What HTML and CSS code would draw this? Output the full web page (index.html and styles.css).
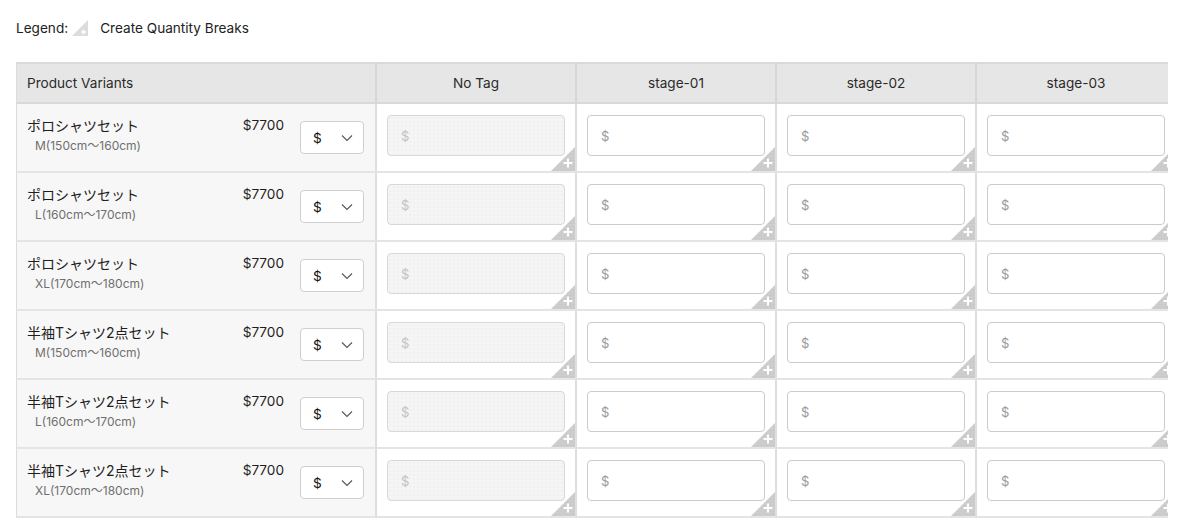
FILE: index.html
```html
<!DOCTYPE html>
<html>
<head>
<meta charset="utf-8">
<link rel="stylesheet" href="styles.css">
</head>
<body>
<div class="page">
  <div class="legend">
    <span>Legend:</span>
    <span class="legend-icon"><svg width="16" height="16" viewBox="0 0 16 16"><polygon points="16,0 16,16 0,16" fill="#dcdcdc"/><path d="M11.5 9.5v5M9 12h5" stroke="#fff" stroke-width="1.6"/></svg></span>
    <span>Create Quantity Breaks</span>
  </div>
  <div class="scroller">
    <table class="grid">
      <thead>
        <tr>
          <th class="col-variant">Product Variants</th>
          <th class="col-tag">No Tag</th>
          <th class="col-tag">stage-01</th>
          <th class="col-tag">stage-02</th>
          <th class="col-tag">stage-03</th>
        </tr>
      </thead>
      <tbody id="rows"></tbody>
    </table>
  </div>
</div>
<template id="row-tpl">
  <tr>
    <td class="variant">
      <div class="variant-inner">
        <div class="info">
          <div class="name"></div>
          <div class="sub"></div>
        </div>
        <div class="price">$7700</div>
        <div class="select"><span>$</span><svg width="12" height="8" viewBox="0 0 12 8"><path d="M1 1.5l5 5 5-5" fill="none" stroke="#555" stroke-width="1.1"/></svg></div>
      </div>
    </td>
  </tr>
</template>
<script>
const data = [
  ["ポロシャツセット","M(150cm〜160cm)"],
  ["ポロシャツセット","L(160cm〜170cm)"],
  ["ポロシャツセット","XL(170cm〜180cm)"],
  ["半袖Tシャツ2点セット","M(150cm〜160cm)"],
  ["半袖Tシャツ2点セット","L(160cm〜170cm)"],
  ["半袖Tシャツ2点セット","XL(170cm〜180cm)"]
];
const tb = document.getElementById('rows');
const tpl = document.getElementById('row-tpl');
const corner = '<span class="corner"><svg width="24" height="24" viewBox="0 0 24 24"><defs><pattern id="d" width="3" height="3" patternUnits="userSpaceOnUse"><rect width="3" height="3" fill="#cdcdcd"/><rect x="1" y="1" width="1" height="1" fill="#c2c2c2"/></pattern></defs><polygon points="24,0 24,24 0,24" fill="url(#d)"/><path d="M17 11.5v9M12.5 16h9" stroke="#fff" stroke-width="2"/></svg></span>';
data.forEach(([n,s]) => {
  const tr = tpl.content.firstElementChild.cloneNode(true);
  tr.querySelector('.name').textContent = n;
  tr.querySelector('.sub').textContent = s;
  for (let i = 0; i < 4; i++) {
    const td = document.createElement('td');
    td.className = 'tag';
    td.innerHTML = '<div class="cell"><div class="input' + (i === 0 ? ' disabled' : '') + '">$</div>' + corner + '</div>';
    tr.appendChild(td);
  }
  tb.appendChild(tr);
});
</script>
</body>
</html>
```
FILE: styles.css
```css
html, body {
  margin: 0;
  padding: 0;
  background: #fff;
}
body {
  font-family: Inter, "Liberation Sans", Arial, "Noto Sans CJK JP", sans-serif;
  font-size: 13.6px;
  color: #222;
}
.page {
  padding: 19px 18px 0 16px;
}
.legend {
  display: flex;
  align-items: center;
  height: 18px;
}
.legend-icon {
  display: inline-flex;
  margin: 0 12px 0 4px;
}
.scroller {
  overflow: hidden;
  margin-top: 25px;
}
.grid {
  border-collapse: separate;
  border-spacing: 0;
  table-layout: fixed;
  width: 1161px;
}
.grid th {
  background: #e6e6e6;
  height: 38px;
  padding: 0;
  font-weight: normal;
  color: #2a2a2a;
  border-top: 2px solid #dadada;
  border-bottom: 2px solid #d9d9d9;
  border-right: 2px solid #d6d6d6;
}
.grid th.col-variant {
  width: 348px;
  text-align: left;
  padding-left: 10px;
  border-left: 1px solid #dcdcdc;
}
.grid th.col-tag {
  width: 198px;
  text-align: center;
}
.grid td {
  padding: 0;
  height: 67px;
  vertical-align: top;
  border-bottom: 2px solid #e4e4e4;
  border-right: 2px solid #dedede;
}
.grid td.variant {
  background: #f7f7f7;
  border-left: 1px solid #dcdcdc;
}
.variant-inner {
  display: flex;
  align-items: flex-start;
  padding: 13px 11px 0 10px;
}
.info {
  flex: 1;
}
.name {
  font-size: 14px;
  font-family: Inter, "Noto Sans CJK JP", sans-serif;
  color: #1e1e1e;
  line-height: 17px;
}
.sub {
  font-size: 12px;
  color: #6f6f6f;
  line-height: 14px;
  margin-top: 5px;
  padding-left: 8px;
}
.price {
  font-size: 13.6px;
  line-height: 17px;
  color: #1e1e1e;
}
.select {
  margin-left: 16px;
  margin-top: 4px;
  width: 40px;
  height: 31px;
  border: 1px solid #cfcfcf;
  border-radius: 4px;
  background: #fff;
  display: flex;
  align-items: center;
  justify-content: space-between;
  padding: 0 10px 0 12px;
  font-size: 13.6px;
  color: #111;
}
.cell {
  position: relative;
  height: 67px;
  padding: 11px 10px 0 10px;
  box-sizing: border-box;
}
.input {
  height: 39px;
  border: 1px solid #cbcbcb;
  border-radius: 4px;
  background: #fff;
  color: #9a9a9a;
  padding-left: 13px;
  display: flex;
  align-items: center;
  font-size: 13px;
}
.input.disabled {
  background-color: #f5f5f5;
  background-image: radial-gradient(circle, #e9e9e9 0.6px, transparent 0.8px);
  background-size: 4px 4px;
  border-color: #d8d8d8;
  color: #c2c2c2;
}
.corner {
  position: absolute;
  right: 0;
  bottom: 0;
  width: 24px;
  height: 24px;
  display: block;
}
.corner svg {
  display: block;
}
```
